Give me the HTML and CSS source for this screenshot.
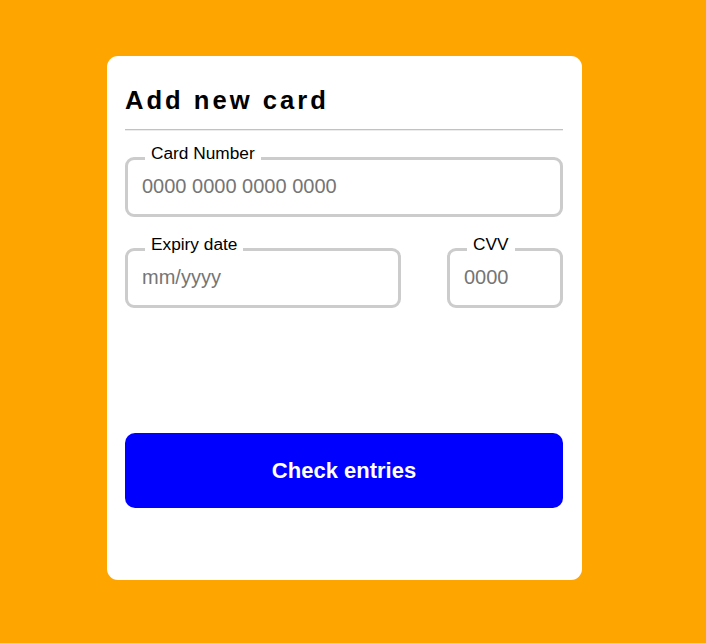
FILE: index.html
```html
<!DOCTYPE html>
<html lang="en">
<head>
<meta charset="utf-8">
<title>Add new card</title>
<link rel="stylesheet" href="styles.css">
</head>
<body>
<div class="card">
  <h2 class="title">Add new card</h2>
  <hr class="divider">
  <form class="form">
    <fieldset class="field">
      <legend class="field-label">Card Number</legend>
      <input class="field-input" type="text" placeholder="0000 0000 0000 0000">
    </fieldset>
    <div class="row">
      <fieldset class="field field-expiry">
        <legend class="field-label">Expiry date</legend>
        <input class="field-input" type="text" placeholder="mm/yyyy">
      </fieldset>
      <fieldset class="field field-cvv">
        <legend class="field-label">CVV</legend>
        <input class="field-input" type="text" placeholder="0000">
      </fieldset>
    </div>
    <button class="submit" type="button">Check entries</button>
  </form>
</div>
</body>
</html>
```
FILE: styles.css
```css
html, body {
  margin: 0;
  padding: 0;
}
body {
  background: #ffa500;
  font-family: "Liberation Sans", Arial, sans-serif;
  padding: 56px 0 0 107px;
  min-height: 643px;
  box-sizing: border-box;
}
.card {
  width: 475px;
  box-sizing: border-box;
  background: #ffffff;
  border-radius: 11px;
  padding: 18px 19px 72px 18px;
}
.title {
  margin: 11px 0 14px;
  font-size: 25.6px;
  line-height: 30px;
  font-weight: bold;
  letter-spacing: 3px;
  color: #000;
}
.divider {
  margin: 0;
  border: none;
  border-top: 1px solid #c2c2c2;
  border-bottom: 1px solid #ececec;
  height: 0;
}
.form {
  display: flex;
  flex-direction: column;
  margin-top: 12px;
}
.row {
  display: flex;
  justify-content: space-between;
  margin-top: 17px;
}
.field {
  margin: 0;
  border: 3px solid #cccccc;
  border-radius: 9px;
  padding: 2px 14px 16px;
  min-width: 0;
  box-sizing: border-box;
}
.field-expiry {
  width: 276px;
}
.field-cvv {
  width: 116px;
}
.field-label {
  margin-left: 3px;
  padding: 0 6px 10px;
  font-size: 17.3px;
  line-height: 20px;
  color: #000;
}
.field-input {
  display: block;
  width: 100%;
  box-sizing: border-box;
  border: none;
  outline: none;
  padding: 0;
  margin: 0;
  font-family: "Liberation Sans", Arial, sans-serif;
  font-size: 20px;
  line-height: 23px;
  color: #000;
  background: transparent;
}
.field-input::placeholder {
  color: #757575;
}
.submit {
  margin-top: 125px;
  height: 75px;
  width: 100%;
  border: none;
  border-radius: 10px;
  background: #0000ff;
  color: #ffffff;
  font-family: "Liberation Sans", Arial, sans-serif;
  font-size: 22px;
  font-weight: bold;
  cursor: pointer;
}
```
